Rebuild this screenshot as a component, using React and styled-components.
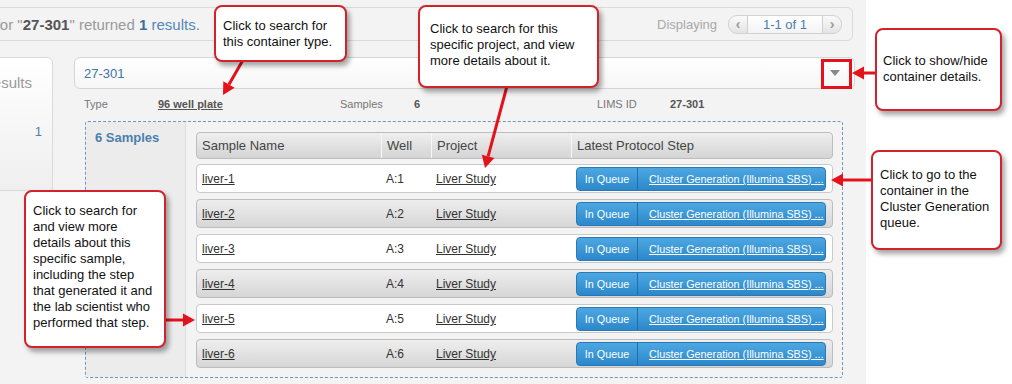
import styled, { createGlobalStyle } from 'styled-components'

const colors = {
  page: '#f3f3f3',
  link: '#3f74a6',
  text: '#333',
  muted: '#999',
  alert: '#e3121b',
}

const samples = [1, 2, 3, 4, 5, 6].map((n) => ({
  name: `liver-${n}`,
  well: `A:${n}`,
  project: 'Liver Study',
}))

const GlobalStyle = createGlobalStyle`
  html, body { margin: 0; padding: 0; background: #fff; }
  body { font-family: "Liberation Sans", Arial, sans-serif; }
`

function Arrow({ x1, y1, x2, y2 }) {
  const len = Math.hypot(x2 - x1, y2 - y1)
  const ux = (x2 - x1) / len
  const uy = (y2 - y1) / len
  const bx = x2 - ux * 12
  const by = y2 - uy * 12
  return (
    <g>
      <line x1={x1} y1={y1} x2={bx} y2={by} stroke={colors.alert} strokeWidth="3" />
      <polygon
        points={`${x2},${y2} ${bx - uy * 6.5},${by + ux * 6.5} ${bx + uy * 6.5},${by - ux * 6.5}`}
        fill={colors.alert}
      />
    </g>
  )
}

function App() {
  return (
    <Root>
      <GlobalStyle />
      <Main>
        <Header>
          Search for&nbsp;"<Term>27-301</Term>"&nbsp;returned&nbsp;<Count>1</Count>&nbsp;<Blue>results.</Blue>
          <Displaying>Displaying</Displaying>
          <Pager>
            <PageBtn>‹</PageBtn>
            <PageBox>1-1 of 1</PageBox>
            <PageBtn>›</PageBtn>
          </Pager>
        </Header>

        <Body>
          <Sidebar>
            <SideTitle>Results</SideTitle>
            <SideItem>1</SideItem>
          </Sidebar>

          <Content>
            <ContainerBar>
              27-301
              <Toggle />
            </ContainerBar>

            <InfoRow>
              <span>Type</span>
              <Value $link>96 well plate</Value>
              <span>Samples</span>
              <Value>6</Value>
              <span>LIMS ID</span>
              <Value>27-301</Value>
            </InfoRow>

            <DashedBox>
              <SamplesCol>6 Samples</SamplesCol>
              <TableArea>
                <HeadRow>
                  <HeadCell>Sample Name</HeadCell>
                  <HeadCell $divider>Well</HeadCell>
                  <HeadCell $divider>Project</HeadCell>
                  <HeadCell $divider>Latest Protocol Step</HeadCell>
                </HeadRow>
                {samples.map((s, i) => (
                  <Row key={s.name} $shaded={i % 2 === 1}>
                    <Cell><u>{s.name}</u></Cell>
                    <Cell>{s.well}</Cell>
                    <Cell><u>{s.project}</u></Cell>
                    <Cell>
                      <StepButton>
                        <Status>In Queue</Status>
                        <StepLink>Cluster Generation (Illumina SBS) ...</StepLink>
                      </StepButton>
                    </Cell>
                  </Row>
                ))}
              </TableArea>
            </DashedBox>
          </Content>
        </Body>
      </Main>

      <Arrows width="1012" height="384">
        <Arrow x1={243} y1={60} x2={223} y2={95} />
        <Arrow x1={507} y1={86} x2={485} y2={168} />
        <Arrow x1={877} y1={73} x2={852} y2={73} />
        <Arrow x1={873} y1={180} x2={831} y2={180} />
        <Arrow x1={164} y1={320} x2={195} y2={320} />
      </Arrows>
      <Highlight />

      <Callout $x={214} $y={5} $w={133} $h={57} $pt={11} $pl={7}>
        Click to search for<br />this container type.
      </Callout>
      <Callout $x={418} $y={5} $w={181} $h={83} $pt={14} $pl={10}>
        Click to search for this<br />specific project, and view<br />more details about it.
      </Callout>
      <Callout $x={875} $y={28} $w={127} $h={83} $pt={23} $pl={6}>
        Click to show/hide<br />container details.
      </Callout>
      <Callout $x={871} $y={150} $w={131} $h={100} $pt={15} $pl={7}>
        Click to go to the<br />container in the<br />Cluster Generation<br />queue.
      </Callout>
      <Callout $x={24} $y={190} $w={142} $h={158} $pt={11} $pl={7}>
        Click to search for<br />and view more<br />details about this<br />specific sample,<br />
        including the step<br />that generated it and<br />the lab scientist who<br />performed that step.
      </Callout>
    </Root>
  )
}

export default App

const Root = styled.div`
  position: relative;
  width: 1012px;
  height: 384px;
  display: flex;
  overflow: hidden;
  background: #fff;
`

const Main = styled.div`
  flex: none;
  width: 866px;
  height: 100%;
  box-sizing: border-box;
  padding-top: 7px;
  background: ${colors.page};
  overflow: hidden;
`

const Header = styled.div`
  display: flex;
  align-items: center;
  height: 34px;
  box-sizing: border-box;
  margin: 0 13px 0 -80px;
  padding-left: 23px;
  border: 1px solid #dadada;
  border-radius: 6px;
  font-size: 15px;
  color: #999;
  white-space: nowrap;
`

const Term = styled.b`
  color: #555;
`

const Count = styled.b`
  color: #3b6f9f;
`

const Blue = styled.span`
  color: #5187ba;
`

const Displaying = styled.span`
  margin-left: auto;
  margin-right: 11px;
  font-size: 13px;
  color: #a8a8a8;
`

const Pager = styled.div`
  display: flex;
  align-items: stretch;
  height: 17px;
  margin-right: 10px;
  border: 1px solid #d2d2d2;
  border-radius: 9px;
  background: linear-gradient(#fafafa, #e4e4e4);
  overflow: hidden;
`

const PageBtn = styled.span`
  width: 18px;
  display: flex;
  align-items: center;
  justify-content: center;
  font-size: 14px;
  font-weight: bold;
  color: #9a9a9a;
`

const PageBox = styled.span`
  width: 74px;
  display: flex;
  align-items: center;
  justify-content: center;
  background: linear-gradient(#fff, #f3f3f3);
  border-left: 1px solid #cfcfcf;
  border-right: 1px solid #cfcfcf;
  font-size: 13px;
  color: #4a7db0;
`

const Body = styled.div`
  display: flex;
  align-items: flex-start;
  margin-top: 16px;
`

const Sidebar = styled.div`
  flex: none;
  width: 153px;
  height: 134px;
  margin-left: -100px;
  box-sizing: border-box;
  padding-top: 16px;
  border: 1px solid #d9d9d9;
  border-top-right-radius: 6px;
  background: linear-gradient(#fff, #efefef);
`

const SideTitle = styled.div`
  padding-left: 81px;
  font-size: 15px;
  line-height: 17px;
  color: #9a9a9a;
`

const SideItem = styled.div`
  display: flex;
  justify-content: flex-end;
  margin-top: 33px;
  padding-right: 10px;
  font-size: 13px;
  line-height: 15px;
  color: #4a7fae;
`

const Content = styled.div`
  flex: 1;
  margin-left: 21px;
  margin-right: 11px;
`

const ContainerBar = styled.div`
  display: flex;
  align-items: center;
  height: 32px;
  box-sizing: border-box;
  padding-left: 9px;
  border: 1px solid #d5d5d5;
  border-radius: 6px;
  background: linear-gradient(#fff, #f6f6f6);
  font-size: 13px;
  color: ${colors.link};
`

const Toggle = styled.span`
  margin-left: auto;
  margin-right: 14px;
  width: 0;
  height: 0;
  border-left: 5px solid transparent;
  border-right: 5px solid transparent;
  border-top: 6px solid #888;
`

const InfoRow = styled.div`
  display: grid;
  grid-template-columns: 74px 182px 74px 183px 73px 1fr;
  margin: 8px 0 0 10px;
  font-size: 11px;
  line-height: 14px;
  color: #777;
`

const Value = styled.span`
  font-weight: bold;
  color: #555;
  text-decoration: ${({ $link }) => ($link ? 'underline' : 'none')};
`

const DashedBox = styled.div`
  display: flex;
  height: 257px;
  box-sizing: border-box;
  margin: 10px 12px 0 11px;
  border: 1px dashed #7096bb;
  border-radius: 3px;
`

const SamplesCol = styled.div`
  flex: none;
  width: 100px;
  box-sizing: border-box;
  padding: 8px 0 0 9px;
  background: #ececec;
  border-right: 1px solid #dcdcdc;
  font-size: 13px;
  line-height: 15px;
  font-weight: bold;
  color: #4b7fae;
`

const TableArea = styled.div`
  flex: 1;
  padding: 10px 9px 0 10px;
`

const HeadRow = styled.div`
  display: grid;
  grid-template-columns: 184px 50px 140px 1fr;
  height: 27px;
  box-sizing: border-box;
  margin-bottom: 5px;
  border: 1px solid #bdbdbd;
  border-radius: 4px;
  background: linear-gradient(#efefef, #d4d4d4);
  font-size: 13px;
  color: #444;
`

const HeadCell = styled.div`
  display: flex;
  align-items: center;
  padding-left: 5px;
  border-left: ${({ $divider }) => ($divider ? '1px solid #f7f7f7' : 'none')};
`

const Row = styled.div`
  display: grid;
  grid-template-columns: 184px 50px 140px 1fr;
  height: 29px;
  box-sizing: border-box;
  margin-bottom: 6px;
  border: 1px solid ${({ $shaded }) => ($shaded ? '#bcbcbc' : '#c9c9c9')};
  border-radius: 4px;
  background: ${({ $shaded }) => ($shaded ? 'linear-gradient(#eeeeee, #d6d6d6)' : '#fff')};
  font-size: 12px;
  color: ${colors.text};
`

const Cell = styled.div`
  display: flex;
  align-items: center;
  padding-left: 5px;
  padding-top: 1px;
`

const StepButton = styled.div`
  display: flex;
  width: 250px;
  height: 24px;
  box-sizing: border-box;
  border: 1px solid #2a78b6;
  border-radius: 4px;
  background: linear-gradient(#4ca7e1, #2d88cb);
  color: #fff;
  font-size: 10.8px;
`

const Status = styled.span`
  width: 60px;
  display: flex;
  align-items: center;
  justify-content: center;
  border-right: 1px solid #236da8;
`

const StepLink = styled.span`
  display: flex;
  align-items: center;
  padding-left: 11px;
  text-decoration: underline;
  white-space: nowrap;
`

const Arrows = styled.svg`
  position: absolute;
  left: 0;
  top: 0;
  pointer-events: none;
`

const Highlight = styled.div`
  position: absolute;
  left: 821px;
  top: 59px;
  width: 31px;
  height: 30px;
  box-sizing: border-box;
  border: 3px solid ${colors.alert};
`

const Callout = styled.div`
  position: absolute;
  left: ${({ $x }) => $x}px;
  top: ${({ $y }) => $y}px;
  width: ${({ $w }) => $w}px;
  height: ${({ $h }) => $h}px;
  box-sizing: border-box;
  padding: ${({ $pt }) => $pt}px 0 0 ${({ $pl }) => $pl}px;
  border: 2px solid #d2232a;
  border-radius: 8px;
  background: #fff;
  box-shadow: 3px 4px 5px rgba(0, 0, 0, 0.35);
  font-size: 13px;
  line-height: 16px;
  color: #111;
  white-space: nowrap;
`
